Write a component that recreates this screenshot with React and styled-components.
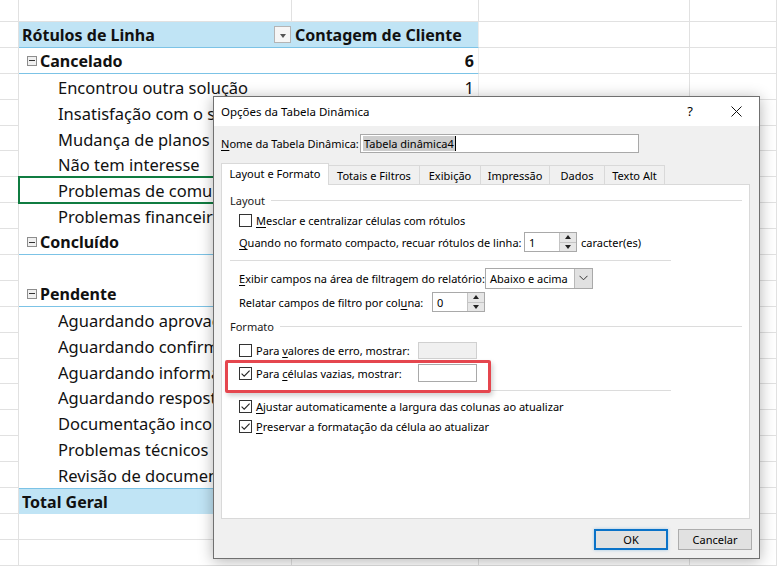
import React from 'react';
import styled, { createGlobalStyle, css } from 'styled-components';

const GlobalStyle = createGlobalStyle`
  html, body { margin: 0; padding: 0; background: #fff; }
  body { width: 777px; height: 566px; overflow: hidden; }
  #root { width: 777px; height: 566px; }
`;

const GRID = '#e1e1e1';
const PIVOT_BLUE = '#c0e4f5';
const PIVOT_LINE = '#7cc3e6';
const ROW_H = 25.9;

/* ---------- worksheet ---------- */

const Screen = styled.div`
  position: relative;
  width: 777px;
  height: 566px;
  overflow: hidden;
  background: #fff;
`;

const Sheet = styled.div`
  display: flex;
  flex-direction: column;
  margin-top: -3.9px;
  font-family: "Noto Sans", sans-serif;
  font-size: 16.5px;
  color: #111;
`;

const SheetRow = styled.div`
  display: grid;
  grid-template-columns: 19px 273px 187px 211px 1fr;
  height: ${ROW_H}px;
  flex: none;
`;

const GridCell = styled.div`
  box-sizing: border-box;
  border-right: 1px solid ${GRID};
  border-bottom: 1px solid ${GRID};
`;

const pivotFill = css`
  ${({ $kind }) =>
    ($kind === 'header' || $kind === 'total' || $kind === 'group') &&
    css`
      font-weight: 700;
      font-size: 16px;
    `}
  ${({ $kind }) =>
    ($kind === 'header' || $kind === 'total') &&
    css`
      background: ${PIVOT_BLUE};
    `}
  ${({ $kind }) =>
    ($kind === 'header' || $kind === 'group') &&
    css`
      border-bottom: 1px solid ${PIVOT_LINE};
    `}
  ${({ $kind }) =>
    $kind === 'total' &&
    css`
      border-top: 1px solid ${PIVOT_LINE};
    `}
`;

const LabelCell = styled.div`
  box-sizing: border-box;
  display: flex;
  align-items: center;
  gap: 3px;
  background: #fff;
  white-space: nowrap;
  overflow: hidden;
  padding-top: 1px;
  padding-left: ${({ $kind }) => ($kind === 'item' ? '39px' : $kind === 'group' ? '8px' : '3px')};
  ${pivotFill}
  ${({ $selected }) =>
    $selected &&
    css`
      position: relative;
      outline: 2px solid #107c41;
      outline-offset: -1px;
    `}
`;

const LabelText = styled.span`
  flex: 1;
  overflow: hidden;
`;

const ValueCell = styled.div`
  box-sizing: border-box;
  display: flex;
  align-items: center;
  justify-content: ${({ $kind }) => ($kind === 'header' ? 'flex-start' : 'flex-end')};
  padding: 1px 4px 0 3px;
  background: #fff;
  white-space: nowrap;
  border-right: 1px solid #ececec;
  ${pivotFill}
`;

const Collapse = styled.span`
  box-sizing: border-box;
  width: 10px;
  height: 10px;
  border: 1px solid #8d8d8d;
  background: #f0f0f0;
  display: inline-flex;
  align-items: center;
  justify-content: center;
  flex: none;
  &::after {
    content: '';
    width: 6px;
    height: 1px;
    background: #333;
  }
`;

const FilterButton = styled.span`
  box-sizing: border-box;
  width: 17px;
  height: 17px;
  margin-right: 1px;
  border: 1px solid #b4b4b4;
  background: #f6f6f6;
  display: inline-flex;
  align-items: flex-end;
  justify-content: center;
  padding-bottom: 4px;
  flex: none;
  &::after {
    content: '';
    border-left: 3.5px solid transparent;
    border-right: 3.5px solid transparent;
    border-top: 4px solid #555;
  }
`;

const pivotRows = [
  { kind: 'header', label: 'Rótulos de Linha', value: 'Contagem de Cliente' },
  { kind: 'group', label: 'Cancelado', value: '6' },
  { kind: 'item', label: 'Encontrou outra solução', value: '1' },
  { kind: 'item', label: 'Insatisfação com o serviço', value: '1' },
  { kind: 'item', label: 'Mudança de planos', value: '1' },
  { kind: 'item', label: 'Não tem interesse', value: '1' },
  { kind: 'item', label: 'Problemas de comunicação', value: '1', selected: true },
  { kind: 'item', label: 'Problemas financeiros', value: '1' },
  { kind: 'group', label: 'Concluído', value: '3' },
  { kind: 'item', label: '', value: '3' },
  { kind: 'group', label: 'Pendente', value: '7' },
  { kind: 'item', label: 'Aguardando aprovação', value: '1' },
  { kind: 'item', label: 'Aguardando confirmação', value: '1' },
  { kind: 'item', label: 'Aguardando informações', value: '1' },
  { kind: 'item', label: 'Aguardando resposta', value: '1' },
  { kind: 'item', label: 'Documentação incompleta', value: '1' },
  { kind: 'item', label: 'Problemas técnicos', value: '1' },
  { kind: 'item', label: 'Revisão de documentos', value: '1' },
  { kind: 'total', label: 'Total Geral', value: '16' },
];

function BlankRow() {
  return (
    <SheetRow>
      <GridCell />
      <GridCell />
      <GridCell />
      <GridCell />
      <GridCell />
    </SheetRow>
  );
}

function PivotRow({ row }) {
  return (
    <SheetRow>
      <GridCell />
      <LabelCell $kind={row.kind} $selected={row.selected}>
        {row.kind === 'group' && <Collapse />}
        <LabelText>{row.label}</LabelText>
        {row.kind === 'header' && <FilterButton />}
      </LabelCell>
      <ValueCell $kind={row.kind}>{row.value}</ValueCell>
      <GridCell />
      <GridCell />
    </SheetRow>
  );
}

/* ---------- dialog ---------- */

const Dialog = styled.div`
  position: absolute;
  z-index: 10;
  left: 213px;
  top: 96px;
  width: 547px;
  height: 463px;
  box-sizing: border-box;
  border: 1px solid #707070;
  background: #f0f0f0;
  box-shadow: 0 2px 14px rgba(0, 0, 0, 0.3);
  display: flex;
  flex-direction: column;
  font-family: "Noto Sans", sans-serif;
  font-size: 11px;
  line-height: 15px;
  color: #000;
  white-space: nowrap;
`;

const TitleBar = styled.div`
  height: 29px;
  flex: none;
  background: #fff;
  display: flex;
  align-items: center;
  padding-left: 7px;
  font-size: 11.5px;
`;

const Title = styled.span`
  flex: 1;
`;

const TitleButton = styled.span`
  width: 46px;
  height: 29px;
  display: flex;
  align-items: center;
  justify-content: center;
  font-size: 13px;
`;

const Body = styled.div`
  flex: 1;
  display: flex;
  flex-direction: column;
  padding: 8px 7px 8px 7px;
`;

const NameRow = styled.div`
  display: flex;
  align-items: center;
  height: 19px;
  flex: none;
`;

const NameLabel = styled.span`
  width: 139px;
  flex: none;
`;

const TextInput = styled.div`
  box-sizing: border-box;
  width: 279px;
  height: 19px;
  border: 1px solid #a9a9a9;
  background: #fff;
  display: flex;
  align-items: center;
  padding-left: 2px;
`;

const Selection = styled.span`
  background: #cdcdcd;
  padding: 0 1px;
  line-height: 15px;
  border-right: 1px solid #000;
`;

const Tabs = styled.div`
  display: flex;
  align-items: flex-end;
  height: 21px;
  margin-top: 10px;
  position: relative;
  z-index: 1;
  flex: none;
`;

const Tab = styled.div`
  box-sizing: border-box;
  width: ${({ $w }) => $w}px;
  height: ${({ $active }) => ($active ? 22 : 19)}px;
  margin-bottom: ${({ $active }) => ($active ? -1 : 0)}px;
  margin-left: -1px;
  &:first-child {
    margin-left: 0;
  }
  border: 1px solid #d9d9d9;
  border-bottom: none;
  background: ${({ $active }) => ($active ? '#fff' : '#f0f0f0')};
  display: flex;
  align-items: center;
  justify-content: center;
  padding-bottom: ${({ $active }) => ($active ? 2 : 0)}px;
`;

const Panel = styled.div`
  position: relative;
  box-sizing: border-box;
  width: 529px;
  height: 335px;
  flex: none;
  border: 1px solid #d9d9d9;
  background: #fff;
  padding-top: 5px;
  display: flex;
  flex-direction: column;
`;

const SectionHead = styled.div`
  height: 20px;
  flex: none;
  display: flex;
  align-items: center;
  gap: 6px;
  padding: 0 7px 0 8px;
  color: #1a1a1a;
  margin-top: ${({ $mt }) => $mt || 0}px;
  &::after {
    content: '';
    flex: 1;
    height: 1px;
    background: #dcdcdc;
  }
`;

const Separator = styled.div`
  height: 14px;
  flex: none;
  display: flex;
  padding-left: 8px;
  &::before {
    content: '';
    margin-top: 7px;
    width: 441px;
    height: 1px;
    background: #dcdcdc;
  }
`;

const Row = styled.div`
  height: ${({ $h }) => $h}px;
  margin-top: ${({ $mt }) => $mt || 0}px;
  flex: none;
  display: flex;
  align-items: center;
  gap: 4px;
  padding-left: 17px;
`;

const FieldLabel = styled.span`
  width: ${({ $w }) => $w}px;
  flex: none;
`;

const Ul = styled.span`
  text-decoration: underline;
  text-underline-offset: 2px;
`;

const CheckBox = styled.span`
  box-sizing: border-box;
  width: 13px;
  height: 13px;
  border: 1px solid #333;
  background: #fff;
  display: inline-flex;
  align-items: center;
  justify-content: center;
  flex: none;
`;

function Check({ checked }) {
  return (
    <CheckBox>
      {checked && (
        <svg width="11" height="11" viewBox="0 0 11 11">
          <path d="M1.6 5.6 L4.2 8.2 L9.6 2.6" fill="none" stroke="#222" strokeWidth="1.1" />
        </svg>
      )}
    </CheckBox>
  );
}

const SpinBox = styled.div`
  box-sizing: border-box;
  width: 53px;
  height: 20px;
  border: 1px solid #a9a9a9;
  background: #fff;
  display: flex;
  flex: none;
`;

const SpinValue = styled.span`
  flex: 1;
  display: flex;
  align-items: center;
  padding-left: 4px;
`;

const SpinButtons = styled.span`
  width: 16px;
  display: flex;
  flex-direction: column;
  border-left: 1px solid #c4c4c4;
  background: #e6e6e6;
`;

const SpinHalf = styled.span`
  flex: 1;
  display: flex;
  align-items: center;
  justify-content: center;
  & + & {
    border-top: 1px solid #c4c4c4;
  }
  &::after {
    content: '';
    border-left: 3.5px solid transparent;
    border-right: 3.5px solid transparent;
    ${({ $up }) => ($up ? 'border-bottom: 4px solid #222;' : 'border-top: 4px solid #222;')}
  }
`;

function Spinner({ value }) {
  return (
    <SpinBox>
      <SpinValue>{value}</SpinValue>
      <SpinButtons>
        <SpinHalf $up />
        <SpinHalf />
      </SpinButtons>
    </SpinBox>
  );
}

const Select = styled.div`
  box-sizing: border-box;
  width: 108px;
  height: 21px;
  border: 1px solid #a9a9a9;
  background: #fff;
  display: flex;
  flex: none;
`;

const SelectValue = styled.span`
  flex: 1;
  display: flex;
  align-items: center;
  padding-left: 4px;
`;

const SelectArrow = styled.span`
  width: 17px;
  background: #e1e1e1;
  border-left: 1px solid #b9b9b9;
  display: flex;
  align-items: center;
  justify-content: center;
`;

const ValueBox = styled.span`
  box-sizing: border-box;
  width: 59px;
  height: ${({ $disabled }) => ($disabled ? 17 : 18)}px;
  border: 1px solid ${({ $disabled }) => ($disabled ? '#d0d0d0' : '#a9a9a9')};
  background: ${({ $disabled }) => ($disabled ? '#f0f0f0' : '#fff')};
  flex: none;
`;

const Highlight = styled.div`
  position: absolute;
  left: 3px;
  top: 175px;
  width: 266px;
  height: 33px;
  box-sizing: border-box;
  border: 3px solid #e5464e;
  border-radius: 2px;
  box-shadow: 2px 3px 5px rgba(0, 0, 0, 0.18);
  pointer-events: none;
`;

const Buttons = styled.div`
  display: flex;
  justify-content: flex-end;
  gap: 10px;
  margin-top: 10px;
  flex: none;
`;

const Button = styled.div`
  box-sizing: border-box;
  width: 74px;
  height: 21px;
  display: flex;
  align-items: center;
  justify-content: center;
  background: #e1e1e1;
  border: ${({ $primary }) => ($primary ? '2px solid #0a72c8' : '1px solid #adadad')};
  box-shadow: ${({ $primary }) => ($primary ? '0 0 3px rgba(0, 120, 215, 0.35)' : 'none')};
`;

const tabs = [
  { label: 'Layout e Formato', w: 108, active: true },
  { label: 'Totais e Filtros', w: 92 },
  { label: 'Exibição', w: 62 },
  { label: 'Impressão', w: 70 },
  { label: 'Dados', w: 56 },
  { label: 'Texto Alt', w: 61 },
];

function PivotOptionsDialog() {
  return (
    <Dialog>
      <TitleBar>
        <Title>Opções da Tabela Dinâmica</Title>
        <TitleButton>?</TitleButton>
        <TitleButton>
          <svg width="11" height="11" viewBox="0 0 11 11">
            <path d="M0.5 0.5 L10.5 10.5 M10.5 0.5 L0.5 10.5" stroke="#111" strokeWidth="1" />
          </svg>
        </TitleButton>
      </TitleBar>
      <Body>
        <NameRow>
          <NameLabel>
            <Ul>N</Ul>ome da Tabela Dinâmica:
          </NameLabel>
          <TextInput>
            <Selection>Tabela dinâmica4</Selection>
          </TextInput>
        </NameRow>

        <Tabs>
          {tabs.map((t) => (
            <Tab key={t.label} $w={t.w} $active={t.active}>
              {t.label}
            </Tab>
          ))}
        </Tabs>

        <Panel>
          <SectionHead>Layout</SectionHead>
          <Row $h={21}>
            <Check />
            <span>
              <Ul>M</Ul>esclar e centralizar células com rótulos
            </span>
          </Row>
          <Row $h={22}>
            <FieldLabel $w={281}>
              <Ul>Q</Ul>uando no formato compacto, recuar rótulos de linha:
            </FieldLabel>
            <Spinner value="1" />
            <span>caracter(es)</span>
          </Row>
          <Separator />
          <Row $h={22}>
            <FieldLabel $w={242}>
              <Ul>E</Ul>xibir campos na área de filtragem do relatório:
            </FieldLabel>
            <Select>
              <SelectValue>Abaixo e acima</SelectValue>
              <SelectArrow>
                <svg width="9" height="6" viewBox="0 0 9 6">
                  <path d="M0.5 0.8 L4.5 4.8 L8.5 0.8" fill="none" stroke="#333" strokeWidth="1" />
                </svg>
              </SelectArrow>
            </Select>
          </Row>
          <Row $h={22} $mt={2}>
            <FieldLabel $w={189}>
              Relatar campos de filtro por col<Ul>u</Ul>na:
            </FieldLabel>
            <Spinner value="0" />
          </Row>
          <SectionHead $mt={3}>Formato</SectionHead>
          <Row $h={20} $mt={4}>
            <Check />
            <FieldLabel $w={158}>
              Para <Ul>v</Ul>alores de erro, mostrar:
            </FieldLabel>
            <ValueBox $disabled />
          </Row>
          <Row $h={20} $mt={3}>
            <Check checked />
            <FieldLabel $w={158}>
              Para <Ul>c</Ul>élulas vazias, mostrar:
            </FieldLabel>
            <ValueBox />
          </Row>
          <Separator />
          <Row $h={19}>
            <Check checked />
            <span>
              <Ul>A</Ul>justar automaticamente a largura das colunas ao atualizar
            </span>
          </Row>
          <Row $h={20}>
            <Check checked />
            <span>
              <Ul>P</Ul>reservar a formatação da célula ao atualizar
            </span>
          </Row>
          <Highlight />
        </Panel>

        <Buttons>
          <Button $primary>OK</Button>
          <Button>Cancelar</Button>
        </Buttons>
      </Body>
    </Dialog>
  );
}

export default function App() {
  return (
    <Screen>
      <GlobalStyle />
      <Sheet>
        <BlankRow />
        {pivotRows.map((row, i) => (
          <PivotRow key={i} row={row} />
        ))}
        <BlankRow />
        <BlankRow />
      </Sheet>
      <PivotOptionsDialog />
    </Screen>
  );
}
